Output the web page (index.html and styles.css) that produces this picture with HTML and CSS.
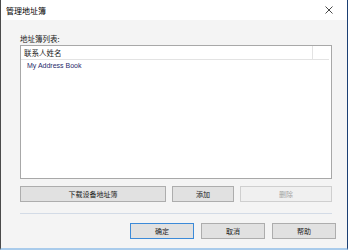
FILE: index.html
```
<!DOCTYPE html>
<html lang="zh">
<head>
    <meta charset="UTF-8">
    <title>管理地址簿</title>
    <link rel="stylesheet" href="styles.css">
</head>
<body>
    <div class="window">
        <div class="titlebar">
            <span class="title">管理地址簿</span>
            <svg class="close" width="8" height="8" viewBox="0 0 8 8">
                <path d="M0.5 0.5L7.5 7.5M7.5 0.5L0.5 7.5" stroke="#333" stroke-width="0.9" fill="none"/>
            </svg>
        </div>
        <div class="content">
            <div class="label">地址簿列表:</div>
            <div class="list">
                <div class="list-header">
                    <div class="col-name">联系人姓名</div>
                    <div class="col-rest"></div>
                </div>
                <div class="list-item">My Address Book</div>
            </div>

            <div class="row-buttons">
                <button class="btn">下载设备地址簿</button>
                <button class="btn">添加</button>
                <button class="btn" disabled>删除</button>
            </div>

            <div class="separator"></div>

            <!-- 底部按钮 -->
            <div class="footer">
                <button class="btn btn-default">确定</button>
                <button class="btn">取消</button>
                <button class="btn">帮助</button>
            </div>
        </div>
    </div>
</body>
</html>
```
FILE: styles.css
```
body {
    margin: 0;
    background: #fff;
    font-family: "Noto Sans CJK SC", "Liberation Sans", sans-serif;
    color: #1a1a1a;
}
.window {
    width: 346px;
    height: 248px;
    border-left: 1px solid #4a4a4a;
    border-right: 1px solid #1b3f73;
    border-bottom: 2px solid #a9cbeb;
    background: #f4f4f4;
    display: flex;
    flex-direction: column;
}
.titlebar {
    height: 20px;
    background: #fff;
    display: flex;
    align-items: center;
    justify-content: space-between;
    padding: 0 14px 0 5px;
}
.title {
    font-size: 8px;
    color: #000;
}
.close {
    display: block;
}
.content {
    padding: 13px 15px 0 19px;
}
.label {
    font-size: 7.5px;
    line-height: 12px;
    height: 12px;
}
.list {
    height: 132px;
    border: 1px solid #a8a8a8;
    background: #fff;
}
.list-header {
    display: flex;
    height: 13px;
    border-bottom: 1px solid #e3e3e3;
    margin-right: 2px;
}
.col-name {
    flex: 1;
    font-size: 7.5px;
    line-height: 13px;
    padding-left: 3px;
    border-right: 1px solid #e3e3e3;
}
.col-rest {
    width: 16px;
}
.list-item {
    font-family: "Liberation Sans", sans-serif;
    font-size: 7px;
    line-height: 12px;
    padding-left: 6px;
    color: #1f2a6b;
}
.row-buttons {
    display: grid;
    grid-template-columns: 146px 62px 92px;
    gap: 6px;
    margin-top: 7px;
}
.btn {
    height: 16px;
    padding: 0;
    background: #e1e1e1;
    border: 1px solid #adadad;
    font-family: "Noto Sans CJK SC", sans-serif;
    font-size: 7px;
    color: #1a1a1a;
}
.btn:disabled {
    background: #f0f0f0;
    border-color: #cfcfcf;
    color: #a3a3a3;
}
.btn-default {
    border-color: #3c8ad8;
}
.separator {
    height: 1px;
    background: #d3dbe6;
    margin-top: 11px;
}
.footer {
    display: flex;
    justify-content: flex-end;
    gap: 7px;
    margin-top: 9px;
    margin-right: -4px;
}
.footer .btn {
    width: 64px;
}
```
